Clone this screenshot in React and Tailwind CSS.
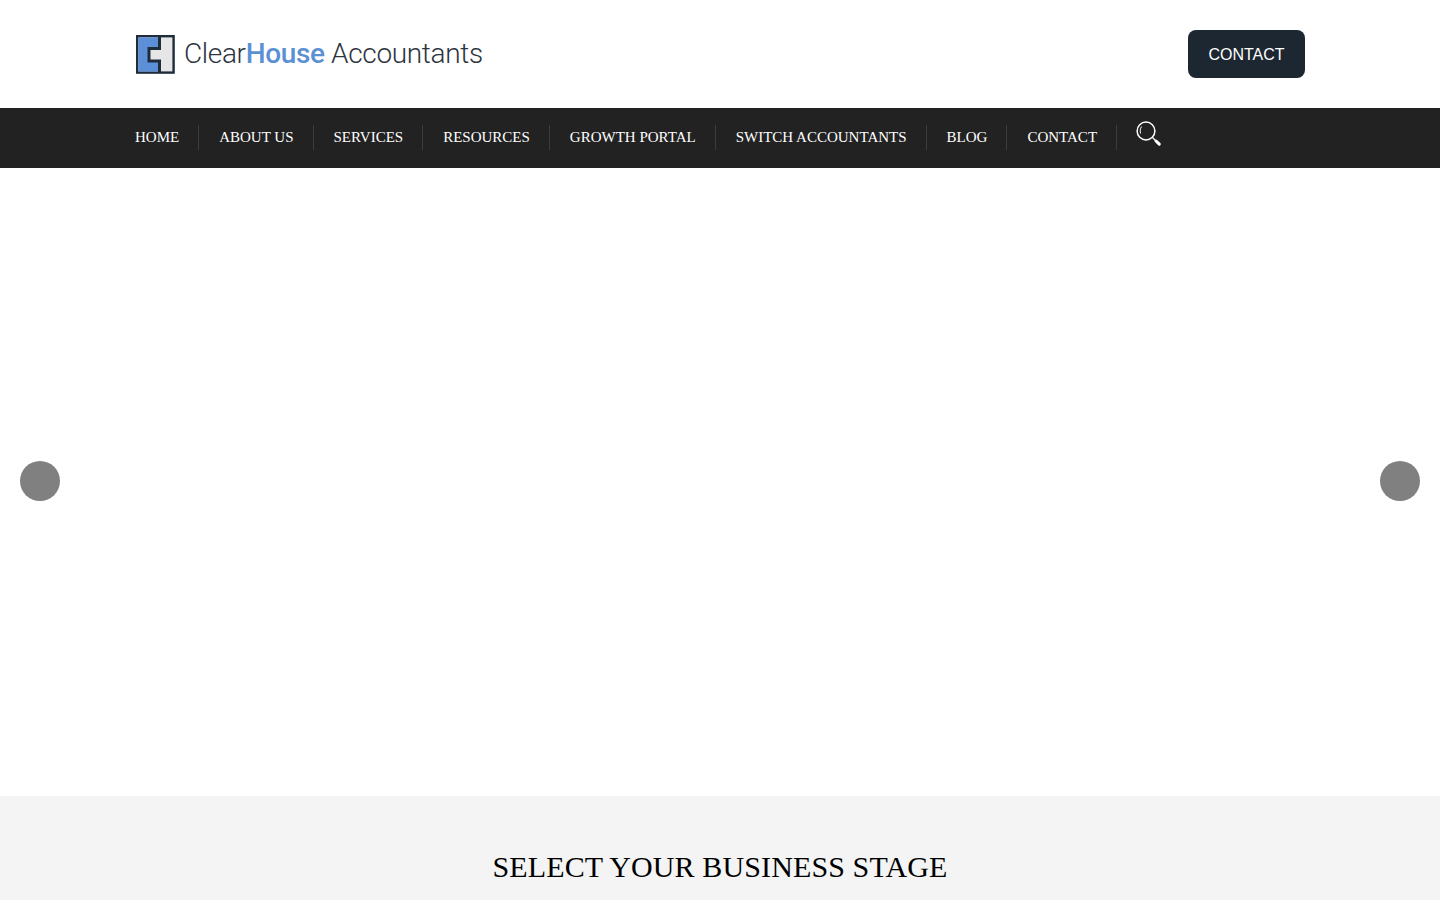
const items = ["HOME", "ABOUT US", "SERVICES", "RESOURCES", "GROWTH PORTAL", "SWITCH ACCOUNTANTS", "BLOG", "CONTACT"];

function LogoMark() {
  return (
    <svg width="39" height="39" viewBox="0 0 39 39" className="shrink-0 ml-px">
      <rect x="1.2" y="1.2" width="36.4" height="36.4" fill="#e6e6e6" stroke="#1f2c3c" strokeWidth="2.4" />
      <path d="M2.4 2.4H23.5V13.5H13V26H23.5V36.4H2.4Z" fill="#5b90d9" />
      <path d="M23.5 1.5V13.5H13V26H23.5V37" fill="none" stroke="#1f2c3c" strokeWidth="3" />
    </svg>
  );
}

function SearchIcon() {
  return (
    <svg width="26" height="26" viewBox="0 0 26 26" fill="none" className="block">
      <circle cx="10" cy="10" r="8.9" stroke="white" strokeWidth="1.5" />
      <path d="M4.6 12.5C3.8 10 4.2 7.5 5.6 5.6" stroke="white" strokeWidth="1" />
      <path d="M16.5 16.5L20 20" stroke="white" strokeWidth="1.2" />
      <path d="M20 20L23.3 23.2" stroke="white" strokeWidth="3" strokeLinecap="round" />
    </svg>
  );
}

export default function App() {
  return (
    <div className="h-[900px] overflow-hidden bg-white font-['Liberation_Serif',serif]">
      <header className="h-[108px] flex items-center justify-between px-[135px]">
        <div className="flex items-center gap-[9px]">
          <LogoMark />
          <div className="font-['Roboto',sans-serif] font-light text-[28px] tracking-[-0.35px] leading-none text-[#2c3440] whitespace-nowrap">
            Clear<span className="font-medium text-[#5b90d4]">House</span> Accountants
          </div>
        </div>
        <a className="flex items-center justify-center w-[117px] h-[48px] rounded-lg bg-[#1d2731] text-white text-base pt-px font-['Liberation_Sans',sans-serif]">CONTACT</a>
      </header>
      <nav className="h-[60px] bg-[#222222] flex items-center pl-[135px]">
        {items.map((t) => (
          <a key={t} className="h-[25px] mt-[-2px] flex items-center pr-[19px] mr-5 border-r border-[#3d3d3d] text-[15px] text-white whitespace-nowrap">{t}</a>
        ))}
        <div className="mt-[-8px] -ml-px"><SearchIcon /></div>
      </nav>
      <main className="relative h-[628px] bg-white">
        <div className="absolute left-5 top-[293px] w-10 h-10 rounded-full bg-[#808080]" />
        <div className="absolute right-5 top-[293px] w-10 h-10 rounded-full bg-[#808080]" />
      </main>
      <section className="h-[104px] bg-[#f4f4f4] pt-[51px]">
        <h2 className="text-center text-[30px] leading-[40px] tracking-[0.12px] text-black">SELECT YOUR BUSINESS STAGE</h2>
      </section>
    </div>
  );
}
